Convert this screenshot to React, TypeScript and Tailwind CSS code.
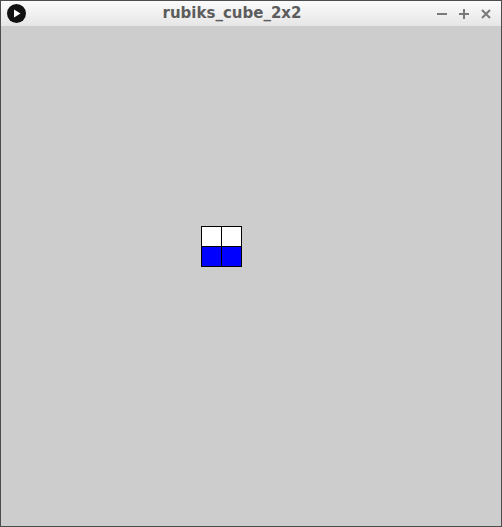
import React from "react";

export default function App() {
  return (
    <div className="w-[502px] h-[527px] border border-[#4d4d4d] flex flex-col bg-[#cdcdcd]" style={{ fontFamily: '"DejaVu Sans", sans-serif' }}>
      <div className="h-[25px] flex items-center bg-gradient-to-b from-[#fbfbfb] to-[#e6e6e6] relative">
        <div className="ml-[6px] w-[19px] h-[19px] rounded-full bg-[#111] flex items-center justify-center">
          <svg width="8" height="9" viewBox="0 0 8 9"><path d="M1 0.5 L7.5 4.5 L1 8.5 Z" fill="#fff" /></svg>
        </div>
        <div className="flex-1 text-center text-[15px] font-bold text-[#5c5c5c] pl-[2px]">rubiks_cube_2x2</div>
        <div className="flex items-center gap-[10px] mr-[9px] text-[#7a7a7a]">
          <svg width="12" height="12" viewBox="0 0 12 12"><path d="M1 6 H11" stroke="#7a7a7a" strokeWidth="2" /></svg>
          <svg width="12" height="12" viewBox="0 0 12 12"><path d="M1 6 H11 M6 1 V11" stroke="#7a7a7a" strokeWidth="2" /></svg>
          <svg width="12" height="12" viewBox="0 0 12 12"><path d="M2 2 L10 10 M10 2 L2 10" stroke="#7a7a7a" strokeWidth="2" /></svg>
        </div>
      </div>
      <div className="flex-1 bg-[#cdcdcd] pl-[200px] pt-[200px]">
        <div className="grid grid-cols-2 w-[41px] border-l border-t border-black">
          <div className="w-[20px] h-[20px] bg-white border-r border-b border-black" />
          <div className="w-[20px] h-[20px] bg-white border-r border-b border-black" />
          <div className="w-[20px] h-[20px] bg-[#0000ff] border-r border-b border-black" />
          <div className="w-[20px] h-[20px] bg-[#0000ff] border-r border-b border-black" />
        </div>
      </div>
    </div>
  );
}
